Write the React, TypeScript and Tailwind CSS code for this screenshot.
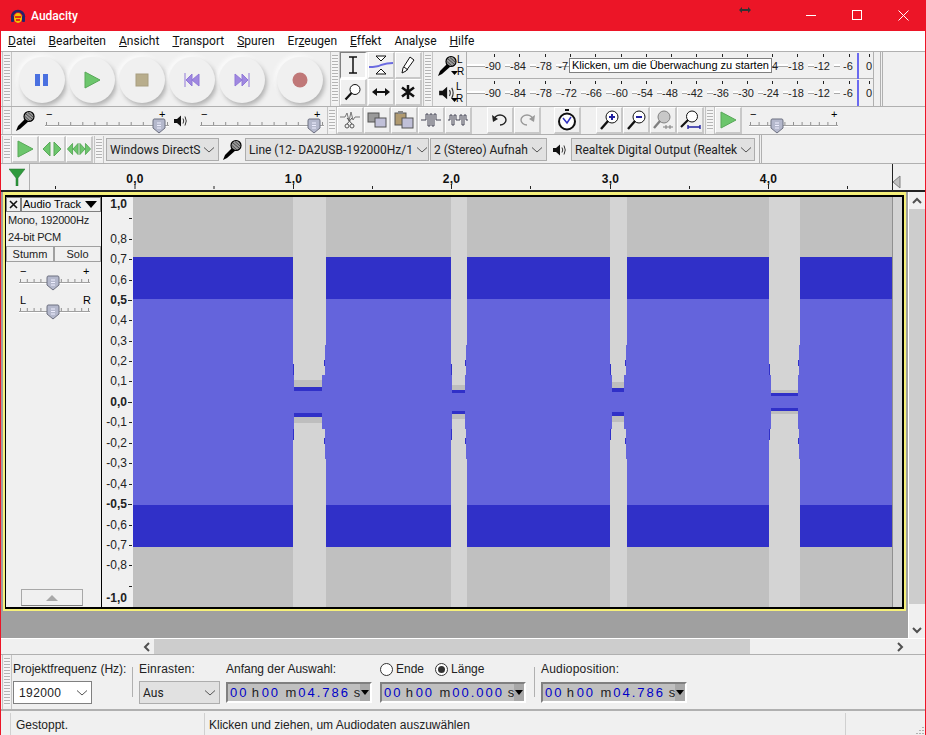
import type { ReactNode } from 'react';

const meterLabels: [string, number][] = [
  ['-90', 27], ['-84', 52], ['-78', 78], ['-72', 103], ['-66', 128], ['-60', 154], ['-54', 179], ['-48', 204],
  ['-42', 229], ['-36', 255], ['-30', 280], ['-24', 305], ['-18', 330], ['-12', 356], ['-6', 382], ['0', 402],
];

const dbLabels: [string, number, boolean][] = [
  ['1,0', 204, true], ['0,8', 239, false], ['0,7', 259, false], ['0,6', 280, false], ['0,5', 300, true],
  ['0,4', 320, false], ['0,3', 341, false], ['0,2', 361, false], ['0,1', 381, false], ['0,0', 402, true],
  ['-0,1', 422, false], ['-0,2', 443, false], ['-0,3', 463, false], ['-0,4', 484, false], ['-0,5', 504, true],
  ['-0,6', 525, false], ['-0,7', 545, false], ['-0,8', 565, false], ['-1,0', 598, true],
];

// x, width, inner inset left/right, then where light gap ends / grey ends / dark ends, mirrored for the lower half
const gaps = [
  { x: 293, w: 33, il: 1, ir: 4, top: [380, 387, 391], bottom: [413, 417, 423] },
  { x: 451, w: 16, il: 1, ir: 2, top: [385, 390, 393], bottom: [411, 414, 419] },
  { x: 610, w: 17, il: 2, ir: 3, top: [382, 388, 392], bottom: [412, 416, 422] },
  { x: 769, w: 31, il: 2, ir: 2, top: [390, 393, 396], bottom: [408, 411, 414] },
];

function Grip({ className = 'h-full' }: { className?: string }) {
  return (
    <div className={`w-[10px] shrink-0 border-x border-[#c4c4c4] px-[1px] py-[3px] ${className}`}>
      <div className="h-full w-full bg-[repeating-linear-gradient(#b4b4b4_0_1px,#f6f6f6_1px_3px)]" />
    </div>
  );
}

function Mic({ size = 22 }: { size?: number }) {
  return (
    <svg width={size} height={size} viewBox="0 0 22 22">
      <path d="M2 21 L4 16 L12 8 L15 11 L6 19 Z" fill="#000" />
      <circle cx="15" cy="6.5" r="5" fill="#9a9a9a" stroke="#000" strokeWidth="1.2" />
      <path d="M12 4 L18 9 M14 2.5 L19.5 7.5 M11 6.5 L16 11" stroke="#333" strokeWidth="0.8" />
    </svg>
  );
}

function Speaker({ size = 14 }: { size?: number }) {
  return (
    <svg width={size} height={size} viewBox="0 0 14 14">
      <path d="M1 5 H4 L8 1.5 V12.5 L4 9 H1 Z" fill="#111" />
      <path d="M10 4.5 Q11.5 7 10 9.5 M12 2.5 Q14.5 7 12 11.5" fill="none" stroke="#333" strokeWidth="1" />
    </svg>
  );
}

function TransportButton({ children, className = '' }: { children: ReactNode; className?: string }) {
  return (
    <div
      className={`flex h-[46px] w-[46px] shrink-0 items-center justify-center rounded-full bg-[#f0f0f0] shadow-[2px_3px_4px_#b4b4b4,-2px_-2px_4px_#fcfcfc] ${className}`}
    >
      {children}
    </div>
  );
}

function IconButton({ children, active = false, w = 'w-[27px]' }: { children: ReactNode; active?: boolean; w?: string }) {
  return (
    <div
      className={`flex h-[27px] shrink-0 items-center justify-center border-b-2 border-r-2 border-[#c8c8c8] bg-[#f0f0f0] ${w} ${
        active ? 'border-l border-t border-b-white border-r-white border-l-[#808080] border-t-[#808080]' : 'border-l border-t border-l-white border-t-white'
      }`}
    >
      {children}
    </div>
  );
}

function Slider({ width, thumb, plusLabel = '+', minusLabel = '−', ticks = 10 }: { width: number; thumb: number; plusLabel?: string; minusLabel?: string; ticks?: number }) {
  return (
    <svg width={width} height={26} viewBox={`0 0 ${width} 26`} className="shrink-0">
      <text x="1" y="10" fontSize="11" fontFamily="Liberation Sans, sans-serif" fill="#000">{minusLabel}</text>
      <text x={width - 8 - (thumb > width - 20 ? 3 : 0)} y="10" fontSize="11" fontFamily="Liberation Sans, sans-serif" fill="#000">{plusLabel}</text>
      {Array.from({ length: ticks + 1 }).map((_, i) => (
        <rect key={i} x={1 + (i * (width - 4)) / ticks} y="14" width="1" height="3" fill="#909090" />
      ))}
      <rect x="0" y="17" width={width - 1} height="1" fill="#a0a0a0" />
      <rect x="0" y="18" width={width - 1} height="1" fill="#ffffff" />
      <path
        d={`M${thumb - 5} 11 H${thumb + 5} Q${thumb + 6} 11 ${thumb + 6} 13 V20 L${thumb} 25 L${thumb - 6} 20 V13 Q${thumb - 6} 11 ${thumb - 5} 11 Z`}
        fill="#b4b8cc"
        stroke="#6d7080"
      />
      <path d={`M${thumb - 2} 15 H${thumb + 2} M${thumb - 2} 17.5 H${thumb + 2} M${thumb - 2} 20 H${thumb + 2}`} stroke="#eef" />
    </svg>
  );
}

function Combo({ label, w, bg = 'bg-[#e1e1e1]' }: { label: string; w: string; bg?: string }) {
  return (
    <div className={`flex h-[23px] shrink-0 items-center overflow-hidden border border-[#adadad] pl-[3px] font-['Roboto',sans-serif] text-[12px] text-[#222] ${w} ${bg}`}>
      <span className="flex-1 whitespace-nowrap">{label}</span>
      <svg width="18" height="10" viewBox="0 0 18 10" className="shrink-0">
        <path d="M4 2.5 L9 7 L14 2.5" fill="none" stroke="#555" strokeWidth="1" />
      </svg>
    </div>
  );
}

function TimeBox({ time }: { time: [string, string, string] }) {
  return (
    <div className="flex h-[21px] w-[146px] shrink-0 items-center border-2 border-b-white border-r-white border-l-[#808080] border-t-[#808080] bg-[#c0c0c0] pl-[2px] font-['Liberation_Sans',sans-serif] text-[13px]">
      <span className="w-[22px] tracking-[2px] text-[#0000c8]">{time[0]}</span>
      <span className="w-[10px] text-[#222]">h</span>
      <span className="w-[22px] tracking-[2px] text-[#0000c8]">{time[1]}</span>
      <span className="ml-[2px] w-[13px] text-[#222]">m</span>
      <span className="w-[55px] tracking-[2px] text-[#0000c8]">{time[2]}</span>
      <span className="ml-[1px] text-[#222]">s</span>
      <span className="ml-auto flex h-full w-[10px] items-center justify-center bg-[#a8a8a8]">
        <svg width="8" height="5" viewBox="0 0 8 5"><path d="M0 0 H8 L4 5 Z" fill="#000" /></svg>
      </span>
    </div>
  );
}

function Meter({ tooltip = false }: { tooltip?: boolean }) {
  // the tooltip lies over the middle of the upper meter, only the clipped ends of two labels stay visible
  const hidden = ['-66', '-60', '-54', '-48', '-42', '-36', '-30', '-72', '-24'];
  return (
    <div className="relative h-full w-[408px] shrink-0 border-x border-[#b0b0b0]">
      <svg width="406" height="27" viewBox="0 0 406 27" className="block">
        <rect x="0" y="12" width="406" height="2" fill="#fff" />
        <rect x="0" y="14" width="406" height="1" fill="#a8a8a8" />
        {meterLabels.map(([label, x]) => (
          <g key={label}>
            <rect x={x} y="2" width="1" height="3" fill="#222" />
            {!(tooltip && hidden.includes(label)) && (
              <>
                <rect x={x - 9} y="11" width="20" height="7" fill="#f0f0f0" />
                <text x={x + (label === '0' ? 0 : -1)} y="18" textAnchor="middle" fontSize="11" fontFamily="Liberation Sans, sans-serif" fill="#222">{label}</text>
              </>
            )}
          </g>
        ))}
        {tooltip && (
          <>
            <text x="101" y="18" textAnchor="end" fontSize="11" fontFamily="Liberation Sans, sans-serif" fill="#222">-7</text>
            <text x="305" y="18" fontSize="11" fontFamily="Liberation Sans, sans-serif" fill="#222">4</text>
          </>
        )}
        <rect x="390" y="1" width="2" height="26" fill="#6a6af0" />
      </svg>
      {tooltip && (
        <div className="absolute left-[102px] top-[6px] h-[15px] w-[203px] whitespace-nowrap border border-[#808080] bg-white pl-[2px] text-[11px] leading-[13px] text-black">
          Klicken, um die Überwachung zu starten
        </div>
      )}
    </div>
  );
}

function ScrollArrow({ d }: { d: string }) {
  return (
    <svg width="10" height="10" viewBox="0 0 10 10" className="shrink-0">
      <path d={d} fill="none" stroke="#505050" strokeWidth="2" />
    </svg>
  );
}

const greenIcon = '#6cc66c';

export default function App() {
  return (
    <div className="flex h-[735px] w-[926px] flex-col overflow-hidden border-x border-[#ec1527] bg-[#f0f0f0] font-['Liberation_Sans',sans-serif] text-[12px] text-black">
      {/* Title bar */}
      <div className="flex h-[31px] shrink-0 items-center bg-[#ec1527] pl-[9px] text-white">
        <svg width="16" height="16" viewBox="0 0 16 16" className="shrink-0">
          <path d="M2 9 A6 6 0 0 1 14 9" fill="none" stroke="#22246a" strokeWidth="2.5" />
          <rect x="1" y="8" width="3" height="6" rx="1" fill="#22246a" />
          <rect x="12" y="8" width="3" height="6" rx="1" fill="#22246a" />
          <ellipse cx="8" cy="10" rx="4" ry="5" fill="#f2c200" />
          <rect x="5" y="8" width="6" height="2" fill="#e03010" />
          <rect x="6" y="11" width="4" height="2" fill="#e03010" />
        </svg>
        <span className="ml-[5px] w-[46px] whitespace-nowrap font-['Roboto',sans-serif] text-[12px] font-medium">Audacity</span>
        <svg width="12" height="6" viewBox="0 0 12 6" className="ml-[662px] -mt-[12px] shrink-0">
          <path d="M0 3 L3 0 V2 H9 V0 L12 3 L9 6 V4 H3 V6 Z" fill="#333" />
        </svg>
        <svg width="11" height="11" viewBox="0 0 11 11" className="ml-[55px] shrink-0"><rect x="0" y="5" width="10" height="1" fill="#fff" /></svg>
        <svg width="11" height="11" viewBox="0 0 11 11" className="ml-[35px] shrink-0"><rect x="0.5" y="0.5" width="9" height="9" fill="none" stroke="#fff" /></svg>
        <svg width="11" height="11" viewBox="0 0 11 11" className="ml-[35px] shrink-0"><path d="M0.5 0.5 L10.5 10.5 M10.5 0.5 L0.5 10.5" stroke="#fff" /></svg>
      </div>

      {/* Menu bar */}
      <div className="flex h-[20px] shrink-0 items-center gap-[13px] bg-white pl-[7px] font-['Roboto',sans-serif] text-[12px] text-[#111]">
        <span><u>D</u>atei</span>
        <span><u>B</u>earbeiten</span>
        <span><u>A</u>nsicht</span>
        <span><u>T</u>ransport</span>
        <span><u>S</u>puren</span>
        <span>Er<u>z</u>eugen</span>
        <span><u>E</u>ffekt</span>
        <span>Anal<u>y</u>se</span>
        <span><u>H</u>ilfe</span>
      </div>

      {/* Transport, tools, meters */}
      <div className="flex h-[56px] shrink-0 items-stretch border-y border-[#b0b0b0] pl-[1px]">
        <Grip />
        <div className="flex w-[318px] shrink-0 items-center pl-[7px] pt-[1px]">
          <TransportButton>
            <svg width="14" height="14" viewBox="0 0 14 14"><rect x="0" y="1" width="5" height="12" fill="#4a70e0" /><rect x="8" y="1" width="5" height="12" fill="#4a70e0" /></svg>
          </TransportButton>
          <TransportButton className="ml-[4px]">
            <svg width="18" height="18" viewBox="0 0 18 18"><path d="M2 1 L17 9 L2 17 Z" fill={greenIcon} stroke="#58a858" /></svg>
          </TransportButton>
          <TransportButton className="ml-[4px]">
            <svg width="14" height="14" viewBox="0 0 14 14"><rect x="1" y="1" width="12" height="12" fill="#b8ad8c" stroke="#a89e80" /></svg>
          </TransportButton>
          <TransportButton className="ml-[4px]">
            <svg width="16" height="14" viewBox="0 0 16 14"><path d="M1 0 V14 M8 1 L2 7 L8 13 Z M15 1 L8 7 L15 13 Z" fill="#a088e0" stroke="#9078d8" /></svg>
          </TransportButton>
          <TransportButton className="ml-[4px]">
            <svg width="16" height="14" viewBox="0 0 16 14"><path d="M15 0 V14 M8 1 L14 7 L8 13 Z M1 1 L8 7 L1 13 Z" fill="#a088e0" stroke="#9078d8" /></svg>
          </TransportButton>
          <TransportButton className="ml-[12px]">
            <svg width="16" height="16" viewBox="0 0 16 16"><circle cx="8" cy="8" r="7.5" fill="#c07878" /></svg>
          </TransportButton>
        </div>
        <Grip />
        <div className="grid w-[83px] shrink-0 grid-cols-3">
          <IconButton active>
            <svg width="14" height="18" viewBox="0 0 14 18"><path d="M3 1 H11 M7 1 V17 M3 17 H11" stroke="#111" strokeWidth="1.5" fill="none" /></svg>
          </IconButton>
          <IconButton>
            <svg width="24" height="20" viewBox="0 0 24 20">
              <path d="M7 1 H17 L12 6 Z M7 19 H17 L12 14 Z" fill="#fff" stroke="#111" />
              <path d="M0 11 Q8 11 12 9 Q18 7 24 7 V9 Q18 9 12 11 Q8 13 0 13 Z" fill="#6a6ae0" />
            </svg>
          </IconButton>
          <IconButton>
            <svg width="14" height="18" viewBox="0 0 14 18"><path d="M9 1 L13 4 L5 15 L1 17 L2 12 Z M3 11 L7 14" fill="#fff" stroke="#111" /></svg>
          </IconButton>
          <IconButton>
            <svg width="18" height="18" viewBox="0 0 18 18"><circle cx="11" cy="6.5" r="5" fill="#fff" stroke="#111" /><path d="M7.5 10 L1.5 16.5" stroke="#111" strokeWidth="2.2" /></svg>
          </IconButton>
          <IconButton>
            <svg width="18" height="10" viewBox="0 0 18 10"><path d="M0 5 L5 1 V4 H13 V1 L18 5 L13 9 V6 H5 V9 Z" fill="#111" /></svg>
          </IconButton>
          <IconButton>
            <svg width="16" height="16" viewBox="0 0 16 16"><path d="M8 1 V15 M2 3.5 L14 12.5 M14 3.5 L2 12.5" stroke="#111" strokeWidth="2.5" /></svg>
          </IconButton>
        </div>
        <Grip />
        <div className="flex w-[33px] shrink-0 flex-col">
          <div className="relative flex h-[27px] items-center pl-[3px]">
            <Mic />
            <span className="ml-[-1px] text-[10px] leading-[12px]">L<br />R</span>
            <svg width="7" height="4" viewBox="0 0 7 4" className="absolute left-[18px] top-[19px]"><path d="M0 0 H7 L3.5 4 Z" fill="#000" /></svg>
          </div>
          <div className="relative flex h-[27px] items-center pl-[5px]">
            <Speaker size={16} />
            <span className="ml-[2px] text-[10px] leading-[12px]">L<br />R</span>
            <svg width="7" height="4" viewBox="0 0 7 4" className="absolute left-[18px] top-[19px]"><path d="M0 0 H7 L3.5 4 Z" fill="#000" /></svg>
          </div>
        </div>
        <div className="flex shrink-0 flex-col">
          <div className="h-[27px] border-b border-[#b0b0b0]"><Meter tooltip /></div>
          <div className="h-[27px]"><Meter /></div>
        </div>
        <div className="ml-[6px] h-full w-[3px] shrink-0 border-x border-[#b0b0b0]" />
      </div>

      {/* Mixer, edit, play-at-speed */}
      <div className="flex h-[28px] shrink-0 items-stretch border-b border-[#b0b0b0] pl-[1px]">
        <Grip />
        <div className="flex w-[315px] shrink-0 items-center pl-[2px]">
          <Mic />
          <div className="ml-[9px]"><Slider width={125} thumb={114} /></div>
          <div className="ml-[3px]"><Speaker /></div>
          <div className="ml-[13px]"><Slider width={125} thumb={114} /></div>
        </div>
        <Grip />
        <div className="flex items-center">
          <IconButton>
            <svg width="20" height="18" viewBox="0 0 20 18">
              <path d="M0 6 H5 L7 2 L9 10 L11 1 L13 9 L15 6 H20" fill="none" stroke="#777" />
              <circle cx="7" cy="15" r="2" fill="none" stroke="#555" /><circle cx="12" cy="15" r="2" fill="none" stroke="#555" />
              <path d="M7 13 L12 7 M12 13 L7 7" stroke="#555" />
            </svg>
          </IconButton>
          <IconButton>
            <svg width="20" height="16" viewBox="0 0 20 16"><rect x="1" y="1" width="11" height="9" fill="#9a9a9a" stroke="#555" /><rect x="8" y="6" width="11" height="9" fill="#c0c0d8" stroke="#555" /></svg>
          </IconButton>
          <IconButton>
            <svg width="20" height="18" viewBox="0 0 20 18"><rect x="1" y="2" width="11" height="12" fill="#b09a70" stroke="#555" /><rect x="4" y="0" width="5" height="3" fill="#888" /><rect x="8" y="7" width="11" height="10" fill="#c0c0d8" stroke="#555" /></svg>
          </IconButton>
          <IconButton>
            <svg width="20" height="14" viewBox="0 0 20 14"><path d="M0 7 H5 V1 H7 V13 H9 V1 H11 V13 H13 V1 H15 V7 H20" fill="none" stroke="#445" /></svg>
          </IconButton>
          <IconButton>
            <svg width="20" height="14" viewBox="0 0 20 14"><path d="M0 7 H2 V2 H4 V12 H6 V2 H8 V7 H12 V2 H14 V12 H16 V2 H18 V7 H20" fill="none" stroke="#445" /></svg>
          </IconButton>
        </div>
        <div className="ml-[15px] flex items-center">
          <IconButton>
            <svg width="16" height="14" viewBox="0 0 16 14"><path d="M2 7 A6 5 0 1 1 8 12" fill="none" stroke="#222" strokeWidth="1.4" /><path d="M0 2 L1 9 L6 6 Z" fill="#222" /></svg>
          </IconButton>
          <IconButton>
            <svg width="16" height="14" viewBox="0 0 16 14"><path d="M14 7 A6 5 0 1 0 8 12" fill="none" stroke="#999" strokeWidth="1.4" /><path d="M16 2 L15 9 L10 6 Z" fill="#999" /></svg>
          </IconButton>
        </div>
        <div className="ml-[13px] flex items-center">
          <IconButton>
            <svg width="20" height="22" viewBox="0 0 20 22"><rect x="8" y="0" width="4" height="2" fill="#111" /><circle cx="10" cy="12.5" r="8" fill="#fff" stroke="#111" strokeWidth="2" /><path d="M6 9 L10 14 L14 8" fill="none" stroke="#3030c0" strokeWidth="1.5" /></svg>
          </IconButton>
        </div>
        <div className="ml-[15px] flex items-center">
          <IconButton>
            <svg width="20" height="20" viewBox="0 0 20 20"><circle cx="13" cy="7" r="6" fill="#fff" stroke="#111" /><path d="M9 11 L2 19" stroke="#111" strokeWidth="2.4" /><path d="M10 7 H16 M13 4 V10" stroke="#2020a0" strokeWidth="2" /></svg>
          </IconButton>
          <IconButton>
            <svg width="20" height="20" viewBox="0 0 20 20"><circle cx="13" cy="7" r="6" fill="#fff" stroke="#111" /><path d="M9 11 L2 19" stroke="#111" strokeWidth="2.4" /><path d="M10 7 H16" stroke="#2020a0" strokeWidth="2" /></svg>
          </IconButton>
          <IconButton>
            <svg width="22" height="20" viewBox="0 0 22 20"><circle cx="12" cy="7" r="6" fill="#c8c8c8" stroke="#808080" /><path d="M8 11 L2 18" stroke="#808080" strokeWidth="2.4" /><path d="M11 17 H21 M14 15 V19 M18 15 V19" stroke="#808080" /></svg>
          </IconButton>
          <IconButton>
            <svg width="22" height="20" viewBox="0 0 22 20"><circle cx="13" cy="6.5" r="5.5" fill="#fff" stroke="#111" /><path d="M9 10 L2 17" stroke="#111" strokeWidth="2.2" /><path d="M9 17 H21 M9 15 V19 M21 15 V19" stroke="#2020a0" strokeWidth="1.4" /></svg>
          </IconButton>
          <Grip className="ml-[1px] h-full" />
          <IconButton>
            <svg width="18" height="18" viewBox="0 0 18 18"><path d="M2 1 L17 9 L2 17 Z" fill={greenIcon} stroke="#58a858" /></svg>
          </IconButton>
          <div className="ml-[7px]"><Slider width={90} thumb={28} /></div>
        </div>
      </div>

      {/* Device toolbar */}
      <div className="flex h-[29px] shrink-0 items-stretch border-b border-[#b0b0b0] pl-[1px] pt-[1px]">
        <Grip />
        <div className="flex items-center">
          <IconButton>
            <svg width="18" height="18" viewBox="0 0 18 18"><path d="M2 1 L17 9 L2 17 Z" fill={greenIcon} stroke="#58a858" /></svg>
          </IconButton>
          <IconButton>
            <svg width="22" height="16" viewBox="0 0 22 16"><path d="M9 1 L2 8 L9 15 Z M13 1 L20 8 L13 15 Z" fill={greenIcon} stroke="#58a858" /></svg>
          </IconButton>
          <IconButton>
            <svg width="26" height="16" viewBox="0 0 26 16"><path d="M6 2 L0.5 8 L6 14 Z M12 2 L6.5 8 L12 14 Z M14 2 L19.5 8 L14 14 Z M20 2 L25.5 8 L20 14 Z" fill={greenIcon} stroke="#58a858" /></svg>
          </IconButton>
        </div>
        <Grip className="ml-[1px] h-full" />
        <div className="flex items-center pl-[2px]">
          <Combo label="Windows DirectS" w="w-[113px]" />
          <div className="mx-[2px] w-[22px]"><Mic /></div>
          <Combo label="Line (12- DA2USB-192000Hz/1" w="w-[184px]" />
          <div className="w-px" />
          <Combo label="2 (Stereo) Aufnah" w="w-[117px]" />
          <div className="ml-[5px] w-[15px]"><Speaker /></div>
          <div className="ml-[4px]"><Combo label="Realtek Digital Output (Realtek" w="w-[184px]" /></div>
          <div className="ml-[4px] h-[29px] w-[3px] border-x border-[#b0b0b0]" />
        </div>
      </div>

      {/* Timeline ruler */}
      <div className="flex h-[28px] shrink-0 items-stretch border-b-2 border-[#222]">
        <div className="flex w-[29px] shrink-0 items-center justify-center border-r border-[#b0b0b0] pl-[4px]">
          <svg width="16" height="18" viewBox="0 0 16 18"><path d="M0 1 H16 L9 10 V18 H7 V10 Z" fill="#2f9a3c" stroke="#1f6e2a" strokeWidth="0.5" /></svg>
        </div>
        <svg width="895" height="26" viewBox="30 164 895 26" className="shrink-0 font-['Liberation_Sans',sans-serif]">
          {[134.5, 293, 451, 610, 768].map((x, i) => (
            <g key={x}>
              <text x={x + 0.5} y="183" textAnchor="middle" fontSize="12" fontWeight="bold" letterSpacing="0.3" fill="#111">{`${i},0`}</text>
              <rect x={x} y="184" width="1" height="5" fill="#222" />
              {i < 5 && <rect x={x + 79} y="186" width="1" height="3" fill="#222" />}
            </g>
          ))}
          <rect x="55" y="186" width="1" height="3" fill="#222" />
          <rect x="892" y="164" width="1" height="26" fill="#222" />
          <path d="M900 176 L893 182 L900 188 Z" fill="#c0c0c0" stroke="#808080" />
        </svg>
      </div>

      {/* Track area plus vertical scrollbar */}
      <div className="flex min-h-0 flex-1 flex-col">
        <div className="flex h-[446px] shrink-0">
          <div className="flex w-[907px] shrink-0 flex-col bg-[#a0a0a0]">
            <div className="ml-[2px] h-[419px] w-[903px] shrink-0 border-b-2 border-l-2 border-r-2 border-t-[3px] border-[#f6f07a]">
              <div className="flex h-full border-b-2 border-l border-r-2 border-t-2 border-black">
                {/* Track controls */}
                <div className="flex w-[95px] shrink-0 flex-col bg-[#f0f0f0] text-[12px]">
                  <div className="flex h-[15px] shrink-0 items-center border-b border-[#808080]">
                    <div className="flex h-[15px] w-[15px] items-center justify-center border border-[#808080]">
                      <svg width="9" height="9" viewBox="0 0 9 9"><path d="M1 1 L8 8 M8 1 L1 8" stroke="#111" strokeWidth="1.6" /></svg>
                    </div>
                    <div className="flex h-[15px] flex-1 items-center border border-[#808080] pl-[1px] text-[11px]">
                      <span className="flex-1 whitespace-nowrap">Audio Track</span>
                      <svg width="12" height="7" viewBox="0 0 12 7" className="mr-[3px]"><path d="M0 0 H12 L6 7 Z" fill="#000" /></svg>
                    </div>
                  </div>
                  <div className="flex h-[34px] shrink-0 flex-col justify-center pl-[2px] text-[11px] leading-[17px] tracking-[-0.2px] text-[#222]">
                    <span>Mono, 192000Hz</span>
                    <span>24-bit PCM</span>
                  </div>
                  <div className="flex h-[16px] shrink-0 border border-[#a0a0a0] text-[11px] leading-[14px] text-[#222]">
                    <span className="w-[48px] border-r-2 border-[#a0a0a0] text-center">Stumm</span>
                    <span className="flex-1 text-center">Solo</span>
                  </div>
                  <div className="flex flex-col pl-[13px] pt-[3px]">
                    <Slider width={72} thumb={34} />
                    <div className="mt-[3px]"><Slider width={72} thumb={34} plusLabel="R" minusLabel="L" /></div>
                  </div>
                  <div className="mb-[1px] mt-auto flex justify-center pr-[3px]">
                    <div className="flex h-[17px] w-[62px] items-center justify-center border border-[#a8a8a8] border-b-[#808080]">
                      <svg width="12" height="6" viewBox="0 0 12 6"><path d="M0 6 L6 0 L12 6 Z" fill="#a8a8a8" /></svg>
                    </div>
                  </div>
                </div>
                {/* dB ruler and waveform */}
                <svg width="791" height="410" viewBox="101 197 791 410" className="shrink-0 bg-[#c0c0c0] font-['Liberation_Sans',sans-serif]">
                  <rect x="101" y="197" width="32" height="410" fill="#f0f0f0" />
                  <rect x="101" y="197" width="1" height="410" fill="#000" />
                  {dbLabels.map(([label, y, bold]) => (
                    <g key={label}>
                      <text x="127" y={y + 4} textAnchor="end" fontSize="12" fontWeight={bold ? 'bold' : 'normal'} fill="#222">{label}</text>
                      {label !== '1,0' && label !== '-1,0' && <rect x={bold ? 128 : 129} y={y} width={bold ? 4 : 3} height="1" fill="#222" />}
                    </g>
                  ))}
                  <rect x="129" y="218" width="3" height="1" fill="#222" />
                  <rect x="129" y="586" width="3" height="1" fill="#222" />
                  <rect x="133" y="197" width="759" height="410" fill="#c0c0c0" />
                  <rect x="133" y="257" width="759" height="290" fill="#3030c8" />
                  <rect x="133" y="299" width="759" height="206" fill="#6464dc" />
                  {gaps.map((g) => {
                    const ix = g.x + g.il;
                    const iw = g.w - g.il - g.ir;
                    return (
                      <g key={g.x}>
                        <rect x={g.x} y="197" width={g.w} height="148" fill="#d4d4d4" />
                        <rect x={g.x} y="345" width={g.w - 1} height="30" fill="#d4d4d4" />
                        <rect x={ix} y="375" width={iw} height={g.top[0] - 375} fill="#d4d4d4" />
                        <rect x={ix} y={g.top[0]} width={iw} height={g.top[1] - g.top[0]} fill="#bebebe" />
                        <rect x={ix} y={g.top[1]} width={iw} height={g.top[2] - g.top[1]} fill="#3030c8" />
                        <rect x={ix} y={g.bottom[0]} width={iw} height={g.bottom[1] - g.bottom[0]} fill="#3030c8" />
                        <rect x={ix} y={g.bottom[1]} width={iw} height={g.bottom[2] - g.bottom[1]} fill="#bebebe" />
                        <rect x={ix} y={g.bottom[2]} width={iw} height={429 - g.bottom[2]} fill="#d4d4d4" />
                        <rect x={g.x} y="429" width={g.w - 1} height="30" fill="#d4d4d4" />
                        <rect x={g.x} y="459" width={g.w} height="148" fill="#d4d4d4" />
                        {/* little dark slivers on the gap edges */}
                        <rect x={g.x} y="364" width="1" height="11" fill="#3030c8" />
                        <rect x={g.x + g.w - 2} y="360" width="1" height="6" fill="#3030c8" />
                        <rect x={g.x} y="429" width="1" height="11" fill="#3030c8" />
                        <rect x={g.x + g.w - 2} y="438" width="1" height="6" fill="#3030c8" />
                      </g>
                    );
                  })}
                </svg>
                <div className="w-[10px] shrink-0 border-l border-[#909090] bg-[#d4d4d4]" />
              </div>
            </div>
            <div className="flex-1" />
          </div>
          {/* Vertical scrollbar */}
          <div className="flex w-[17px] shrink-0 flex-col items-center border-l border-white bg-[#f0f0f0]">
            <div className="flex h-[17px] items-center"><ScrollArrow d="M1 7 L5 3 L9 7" /></div>
            <div className="w-full flex-1 bg-[#cdcdcd]" />
            <div className="h-[17px] w-full" />
            <div className="flex h-[17px] items-center"><ScrollArrow d="M1 3 L5 7 L9 3" /></div>
          </div>
        </div>

        {/* Horizontal scrollbar */}
        <div className="flex h-[17px] shrink-0 items-center border-b border-[#b0b0b0] border-t border-t-white">
          <div className="ml-[139px] flex w-[14px] justify-center"><ScrollArrow d="M7 1 L3 5 L7 9" /></div>
          <div className="h-full w-[596px] bg-[#cdcdcd]" />
          <div className="ml-[145px]"><ScrollArrow d="M3 1 L7 5 L3 9" /></div>
        </div>

        {/* Selection toolbar */}
        <div className="flex h-[56px] shrink-0 items-stretch border-b-2 border-[#b0b0b0] pl-[1px] font-['Liberation_Sans',sans-serif] text-[12px] text-[#222]">
          <Grip />
          <div className="flex w-[120px] shrink-0 flex-col pl-[1px] pt-[5px]">
            <span className="h-[18px] whitespace-nowrap">Projektfrequenz (Hz):</span>
            <div className="mt-[3px] flex h-[23px] w-[79px] items-center border border-[#808080] bg-white pl-[5px]">
              <span className="flex-1 tracking-[0.4px]">192000</span>
              <svg width="18" height="10" viewBox="0 0 18 10"><path d="M4 2.5 L9 7 L14 2.5" fill="none" stroke="#555" /></svg>
            </div>
          </div>
          <div className="my-[12px] w-[1px] shrink-0 bg-[#b0b0b0]" />
          <div className="flex w-[87px] shrink-0 flex-col pl-[6px] pt-[5px]">
            <span className="h-[18px] tracking-[0.2px]">Einrasten:</span>
            <div className="mt-[3px]"><Combo label="Aus" w="w-[81px]" /></div>
          </div>
          <div className="flex w-[160px] shrink-0 flex-col pl-[6px] pt-[5px]">
            <span className="h-[18px] whitespace-nowrap">Anfang der Auswahl:</span>
            <div className="mt-[4px]"><TimeBox time={['00', '00', '04.786']} /></div>
          </div>
          <div className="flex w-[154px] shrink-0 flex-col pt-[5px]">
            <div className="flex h-[18px] items-center">
              <span className="h-[13px] w-[13px] rounded-full border border-[#333] bg-white" />
              <span className="ml-[3px]">Ende</span>
              <span className="ml-[11px] flex h-[13px] w-[13px] items-center justify-center rounded-full border border-[#333] bg-white">
                <span className="h-[7px] w-[7px] rounded-full bg-[#333]" />
              </span>
              <span className="ml-[3px]">Länge</span>
            </div>
            <div className="mt-[4px]"><TimeBox time={['00', '00', '00.000']} /></div>
          </div>
          <div className="my-[12px] w-[1px] shrink-0 bg-[#b0b0b0]" />
          <div className="flex w-[160px] shrink-0 flex-col pl-[6px] pt-[5px]">
            <span className="h-[18px] tracking-[0.2px]">Audioposition:</span>
            <div className="mt-[4px]"><TimeBox time={['00', '00', '04.786']} /></div>
          </div>
        </div>

        {/* Status bar */}
        <div className="flex min-h-0 flex-1 items-stretch pt-[2px] text-[12px] text-[#222]">
          <span className="ml-[9px] flex w-[195px] shrink-0 items-center border-x border-[#d0d0d0] pl-[5px] pt-[1px]">Gestoppt.</span>
          <span className="flex w-[641px] shrink-0 items-center border-r border-[#d0d0d0] pl-[4px] pt-[1px]">Klicken und ziehen, um Audiodaten auszuwählen</span>
          <svg width="10" height="10" viewBox="0 0 10 10" className="ml-auto mt-auto">
            <path d="M7 8 h2 v1 h-2 Z M4 8 h2 v1 h-2 Z M1 8 h2 v1 h-2 Z M7 5 h2 v1 h-2 Z M4 5 h2 v1 h-2 Z M7 2 h2 v1 h-2 Z" fill="#b0b0b0" />
          </svg>
        </div>
      </div>
    </div>
  );
}
